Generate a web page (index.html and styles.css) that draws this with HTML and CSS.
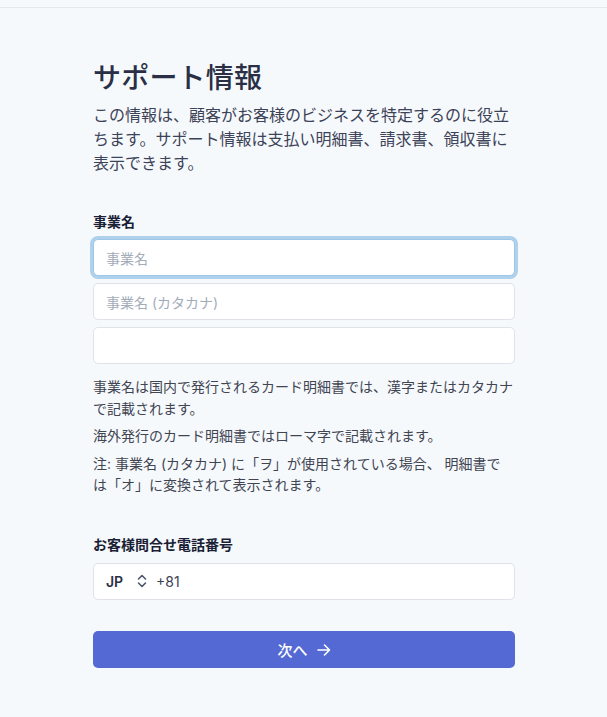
FILE: index.html
```html
<!DOCTYPE html>
<html lang="ja">
<head>
<meta charset="utf-8">
<title>サポート情報</title>
<link rel="stylesheet" href="styles.css">
</head>
<body>
<div class="topbar"></div>
<main class="page">
  <h1 class="title">サポート情報</h1>
  <p class="lead">この情報は、顧客がお客様のビジネスを特定するのに役立ちます。サポート情報は支払い明細書、請求書、領収書に表示できます。</p>

  <section class="field-group business">
    <label class="label">事業名</label>
    <div class="inputs">
      <div class="input focused"><span class="placeholder">事業名</span></div>
      <div class="input"><span class="placeholder">事業名 (カタカナ)</span></div>
      <div class="input"></div>
    </div>
    <div class="notes">
      <p>事業名は国内で発行されるカード明細書では、漢字またはカタカナで記載されます。</p>
      <p>海外発行のカード明細書ではローマ字で記載されます。</p>
      <p>注: 事業名 (カタカナ) に「ヲ」が使用されている場合、 明細書で<br>は「オ」に変換されて表示されます。</p>
    </div>
  </section>

  <section class="field-group phone">
    <label class="label">お客様問合せ電話番号</label>
    <div class="input phone-input">
      <span class="country">JP</span>
      <svg class="updown" width="10" height="14" viewBox="0 0 10 14" aria-hidden="true">
        <path d="M1.5 5 L5 1.5 L8.5 5" fill="none" stroke="#4f566b" stroke-width="1.6" stroke-linecap="round" stroke-linejoin="round"/>
        <path d="M1.5 9 L5 12.5 L8.5 9" fill="none" stroke="#4f566b" stroke-width="1.6" stroke-linecap="round" stroke-linejoin="round"/>
      </svg>
      <span class="dial">+81</span>
    </div>
  </section>

  <button class="next" type="button">次へ
    <svg class="arrow" width="14" height="12" viewBox="0 0 14 12" aria-hidden="true">
      <path d="M1 6 H12.5 M7.5 1 L12.5 6 L7.5 11" fill="none" stroke="#fff" stroke-width="1.6" stroke-linecap="round" stroke-linejoin="round"/>
    </svg>
  </button>
</main>
</body>
</html>
```
FILE: styles.css
```css
* { box-sizing: border-box; }
html, body { margin: 0; padding: 0; }
body {
  background: #f6f9fc;
  font-family: Inter, "Noto Sans CJK JP", sans-serif;
  color: #3c4257;
  width: 607px;
  height: 717px;
  overflow: hidden;
}
.topbar {
  height: 8px;
  border-bottom: 1px solid #e3e8ee;
}
.page {
  width: 422px;
  margin-left: 93px;
  padding-top: 52px;
}
.title {
  margin: 0;
  font-size: 28px;
  line-height: 36px;
  font-weight: 500;
  color: #2a2f45;
  letter-spacing: 0.2px;
}
.lead {
  margin: 7px 0 0;
  font-size: 16px;
  line-height: 24px;
  color: #3c4257;
}
.field-group { display: flex; flex-direction: column; }
.business { margin-top: 37px; }
.label {
  font-size: 14px;
  line-height: 20px;
  font-weight: 600;
  color: #1a1f36;
  margin-bottom: 7px;
}
.inputs { display: flex; flex-direction: column; gap: 7px; }
.input {
  height: 37px;
  background: #fff;
  border: 1px solid #dfe3e8;
  border-radius: 5px;
  display: flex;
  align-items: center;
  padding: 0 12px;
  font-size: 14px;
}
.input.focused {
  border-color: #9cc7e6;
  box-shadow: 0 0 0 3px rgba(88, 160, 214, 0.45);
}
.placeholder { color: #a3acb9; }
.notes {
  margin-top: 12px;
  font-size: 14px;
  line-height: 21.5px;
  color: #414552;
}
.notes p { margin: 0 0 6px; }
.notes p:last-child { margin-bottom: 0; }
.phone { margin-top: 39px; }
.phone .label { margin-bottom: 8px; }
.phone-input { color: #3c4257; }
.country { font-weight: 600; color: #2a2f45; width: 31px; }
.updown { margin-right: 9px; }
.dial { color: #3c4257; }
.next {
  margin-top: 31px;
  width: 422px;
  height: 37px;
  border: 0;
  border-radius: 5px;
  background: #5469d4;
  color: #fff;
  font-family: Inter, "Noto Sans CJK JP", sans-serif;
  font-size: 15px;
  font-weight: 500;
  display: flex;
  align-items: center;
  justify-content: center;
  gap: 9px;
  padding: 0;
}
.arrow { margin-top: 1px; }
```
